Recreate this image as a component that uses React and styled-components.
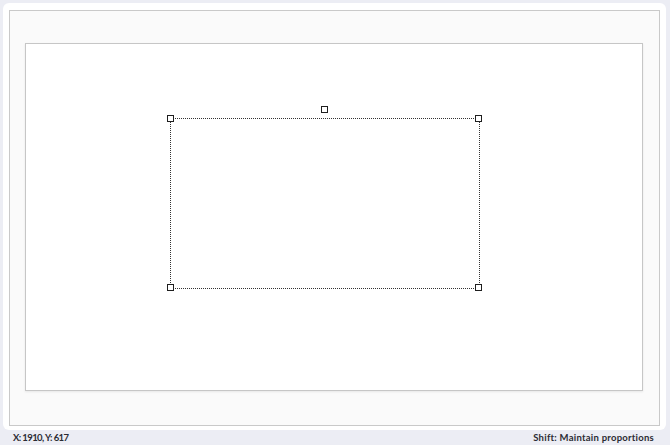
import React from "react";
import styled, { createGlobalStyle } from "styled-components";

const GlobalStyle = createGlobalStyle`
  html, body {
    margin: 0;
    padding: 0;
    background: #ecedf4;
  }
  body {
    font-family: "Lato", "Liberation Sans", sans-serif;
  }
`;

const App = () => {
  const selection = { x: 144, y: 74, w: 310, h: 171 };
  const corners = [
    [0, 0],
    [1, 0],
    [0, 1],
    [1, 1],
  ];
  return (
    <>
      <GlobalStyle />
      <Screen>
        <Panel>
          <Stage>
            <Canvas>
              <Selection
                style={{
                  left: selection.x,
                  top: selection.y,
                  width: selection.w,
                  height: selection.h,
                }}
              >
                {corners.map(([cx, cy]) => (
                  <Handle key={`${cx}-${cy}`} $x={cx} $y={cy} />
                ))}
                <RotateHandle />
              </Selection>
            </Canvas>
          </Stage>
        </Panel>
        <StatusBar>
          <StatusText $tight>X: 1910, Y: 617</StatusText>
          <StatusText>Shift: Maintain proportions</StatusText>
        </StatusBar>
      </Screen>
    </>
  );
};

const Screen = styled.div`
  width: 670px;
  height: 445px;
  padding: 3px 4px 0 3px;
  box-sizing: border-box;
  display: flex;
  flex-direction: column;
`;

const Panel = styled.div`
  background: #ffffff;
  border-radius: 6px;
  height: 427px;
  padding: 7px 6px 4px 6px;
  box-sizing: border-box;
  display: flex;
`;

const Stage = styled.div`
  flex: 1;
  background: #fafafa;
  border: 1px solid #c9c9c9;
  padding: 32px 16px 34px 15px;
  display: flex;
`;

const Canvas = styled.div`
  flex: 1;
  position: relative;
  background: #ffffff;
  border: 1px solid #c6c6c6;
  box-shadow: 0 1px 2px rgba(0, 0, 0, 0.08);
`;

const Selection = styled.div`
  position: absolute;
  border: 1px dotted #333333;
  box-sizing: border-box;
`;

const Handle = styled.div`
  position: absolute;
  width: 7px;
  height: 7px;
  background: #ffffff;
  border: 1.5px solid #1e1e1e;
  box-sizing: border-box;
  left: ${(p) => (p.$x ? "calc(100% - 4px)" : "-4px")};
  top: ${(p) => (p.$y ? "calc(100% - 4px)" : "-4px")};
`;

const RotateHandle = styled(Handle)`
  left: calc(50% - 4px);
  top: -13px;
`;

const StatusBar = styled.div`
  display: flex;
  justify-content: space-between;
  align-items: center;
  height: 14px;
  padding: 0 12px 1px 10px;
  font-size: 9.5px;
  font-weight: 700;
  color: #2b2b33;
`;

const StatusText = styled.span`
  letter-spacing: ${(p) => (p.$tight ? "-0.6px" : "0.25px")};
`;

export default App;
